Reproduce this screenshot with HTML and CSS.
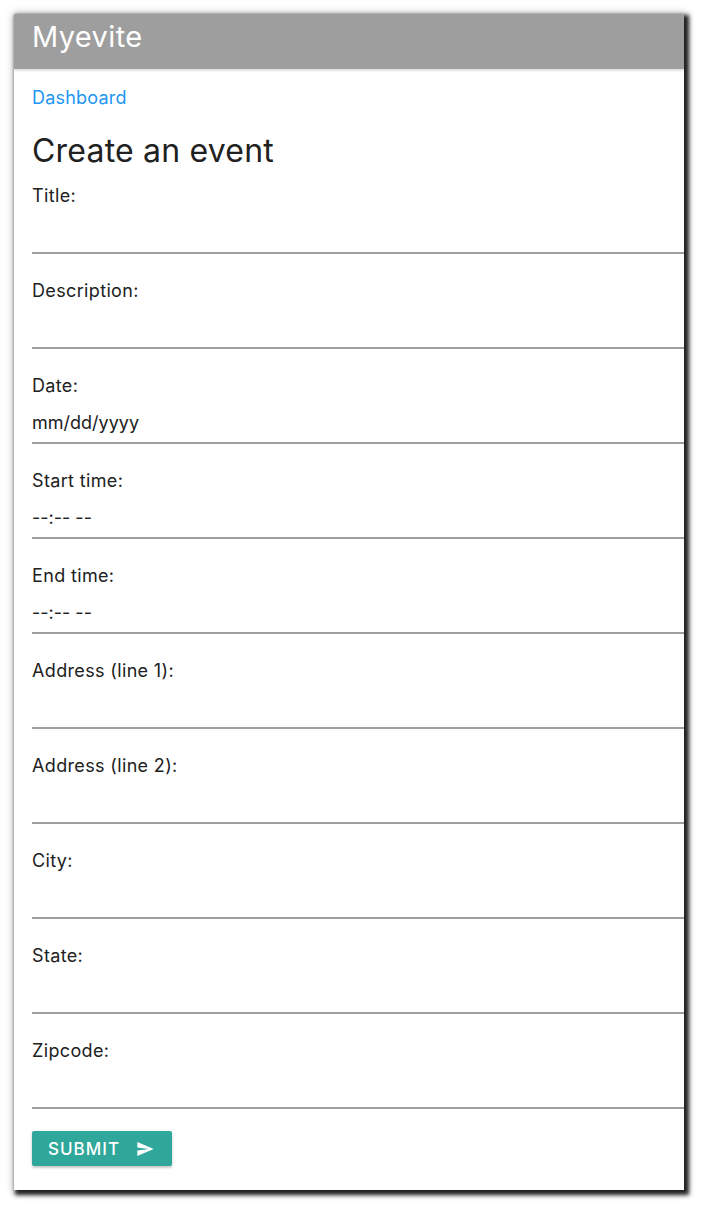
FILE: index.html
```html
<!DOCTYPE html>
<html lang="en">
<head>
<meta charset="utf-8">
<title>Myevite - Create an event</title>
<link rel="stylesheet" href="styles.css">
</head>
<body>
<div class="window">
  <header class="appbar">
    <span class="brand">Myevite</span>
  </header>
  <main class="content">
    <a class="crumb" href="#">Dashboard</a>
    <h1 class="page-title">Create an event</h1>
    <form class="event-form">
      <div class="field">
        <label for="title">Title:</label>
        <input id="title" type="text">
      </div>
      <div class="field">
        <label for="description">Description:</label>
        <input id="description" type="text">
      </div>
      <div class="field">
        <label for="date">Date:</label>
        <input id="date" type="text" placeholder="mm/dd/yyyy">
      </div>
      <div class="field">
        <label for="start">Start time:</label>
        <input id="start" type="text" placeholder="--:-- --">
      </div>
      <div class="field">
        <label for="end">End time:</label>
        <input id="end" type="text" placeholder="--:-- --">
      </div>
      <div class="field">
        <label for="addr1">Address (line 1):</label>
        <input id="addr1" type="text">
      </div>
      <div class="field">
        <label for="addr2">Address (line 2):</label>
        <input id="addr2" type="text">
      </div>
      <div class="field">
        <label for="city">City:</label>
        <input id="city" type="text">
      </div>
      <div class="field">
        <label for="state">State:</label>
        <input id="state" type="text">
      </div>
      <div class="field">
        <label for="zip">Zipcode:</label>
        <input id="zip" type="text">
      </div>
      <button class="submit" type="submit">
        <span>Submit</span>
        <svg class="send" viewBox="2 3 21 18" width="17" height="14" aria-hidden="true"><path d="M2.01 21L23 12 2.01 3 2 10l15 2-15 2z" fill="#fff"/></svg>
      </button>
    </form>
  </main>
</div>
</body>
</html>
```
FILE: styles.css
```css
html, body {
  margin: 0;
  padding: 0;
  background: #ffffff;
}

body {
  font-family: Inter, "Noto Sans", "Liberation Sans", sans-serif;
  color: #212121;
  padding: 14px 0 19px 14px;
}

.window {
  width: 670px;
  background: #fff;
  overflow: hidden;
  box-shadow: 3px 3px 4px 2px rgba(0, 0, 0, 0.85), 1px 1px 8px 2px rgba(0, 0, 0, 0.22);
}

.appbar {
  height: 55px;
  background: #9e9e9e;
  padding: 0 18px 9px;
  box-sizing: border-box;
  box-shadow: 0 1px 3px rgba(0, 0, 0, 0.2);
  position: relative;
}

.brand {
  display: block;
  color: #fff;
  font-size: 29px;
  line-height: 46px;
  letter-spacing: 0.4px;
}

.content {
  padding: 18px 0 24px 18px;
}

.crumb {
  display: block;
  color: #2196f3;
  text-decoration: none;
  font-size: 18px;
  line-height: 22px;
  letter-spacing: 0.2px;
}

.page-title {
  margin: 22px 0 14px;
  font-size: 32px;
  line-height: 40px;
  font-weight: 400;
  letter-spacing: 0.2px;
  color: #212121;
}

.event-form {
  display: flex;
  flex-direction: column;
}

.field {
  display: flex;
  flex-direction: column;
}

.field + .field {
  margin-top: 26px;
}

.field label {
  font-size: 18px;
  line-height: 22px;
  letter-spacing: 0.35px;
  color: #212121;
}

.field input {
  display: block;
  width: 100%;
  height: 47px;
  box-sizing: border-box;
  padding: 6px 0 0;
  margin: 0;
  border: 0;
  border-bottom: 2px solid #9e9e9e;
  outline: none;
  background: transparent;
  font-family: inherit;
  font-size: 18px;
  color: #212121;
}

.field input::placeholder {
  color: #212121;
  opacity: 1;
}

.submit {
  align-self: flex-start;
  margin-top: 22px;
  height: 35px;
  width: 140px;
  box-sizing: border-box;
  padding: 0 18px 0 16px;
  border: 0;
  border-radius: 2px;
  background: #2fa79a;
  color: #fff;
  font-family: inherit;
  font-size: 17px;
  font-weight: 500;
  letter-spacing: 1px;
  text-transform: uppercase;
  display: flex;
  align-items: center;
  justify-content: space-between;
  box-shadow: 0 2px 2px rgba(0, 0, 0, 0.14), 0 1px 4px rgba(0, 0, 0, 0.12);
  cursor: pointer;
}

.send {
  display: block;
}
```
